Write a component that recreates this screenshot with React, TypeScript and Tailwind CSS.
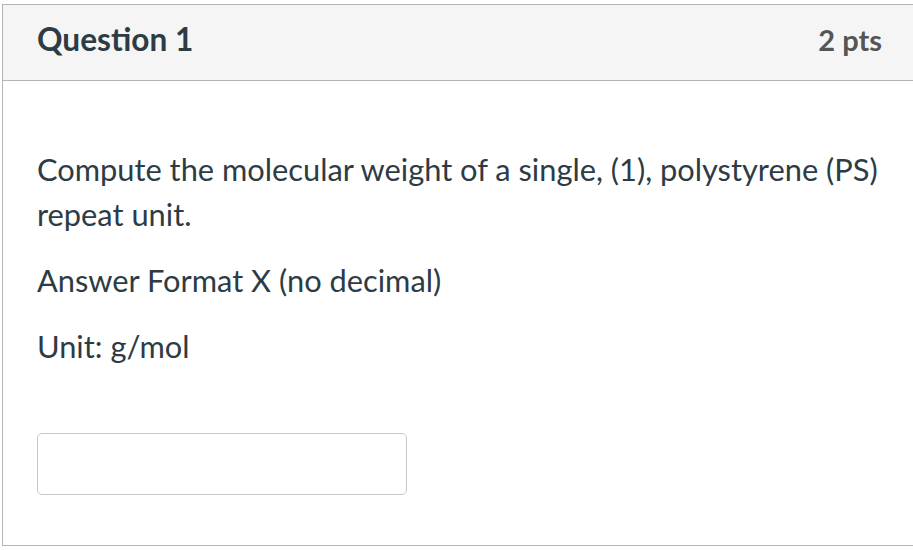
import React from "react";

const App: React.FC = () => {
  return (
    <div
      className="w-[913px] h-[550px] overflow-hidden bg-white pt-1 pl-[2px]"
      style={{ fontFamily: "Lato, 'Noto Sans', sans-serif" }}
    >
      <div className="w-[940px] h-[542px] border border-[#b5b5b5] flex flex-col">
        <div className="h-[76px] shrink-0 bg-[#f5f5f5] border-b border-[#b5b5b5] flex items-center justify-between pl-[34px] pr-[59px] pb-[5px]">
          <h2 className="text-[31.6px] font-bold text-[#2d3b45]">Question 1</h2>
          <span className="text-[29px] font-bold text-[#555555]">2 pts</span>
        </div>
        <div className="pl-[34px] pt-[66px] text-[30.8px] text-[#2d3b45] leading-[45px]">
          <p className="w-[860px]">
            Compute the molecular weight of a single, (1), polystyrene (PS) repeat unit.
          </p>
          <p className="mt-[21px]">Answer Format X (no decimal)</p>
          <p className="mt-[21px]">Unit: g/mol</p>
          <input
            type="text"
            className="mt-[64px] w-[370px] h-[62px] border border-[#c7c7c7] rounded-[5px] outline-none"
          />
        </div>
      </div>
    </div>
  );
};

export default App;
